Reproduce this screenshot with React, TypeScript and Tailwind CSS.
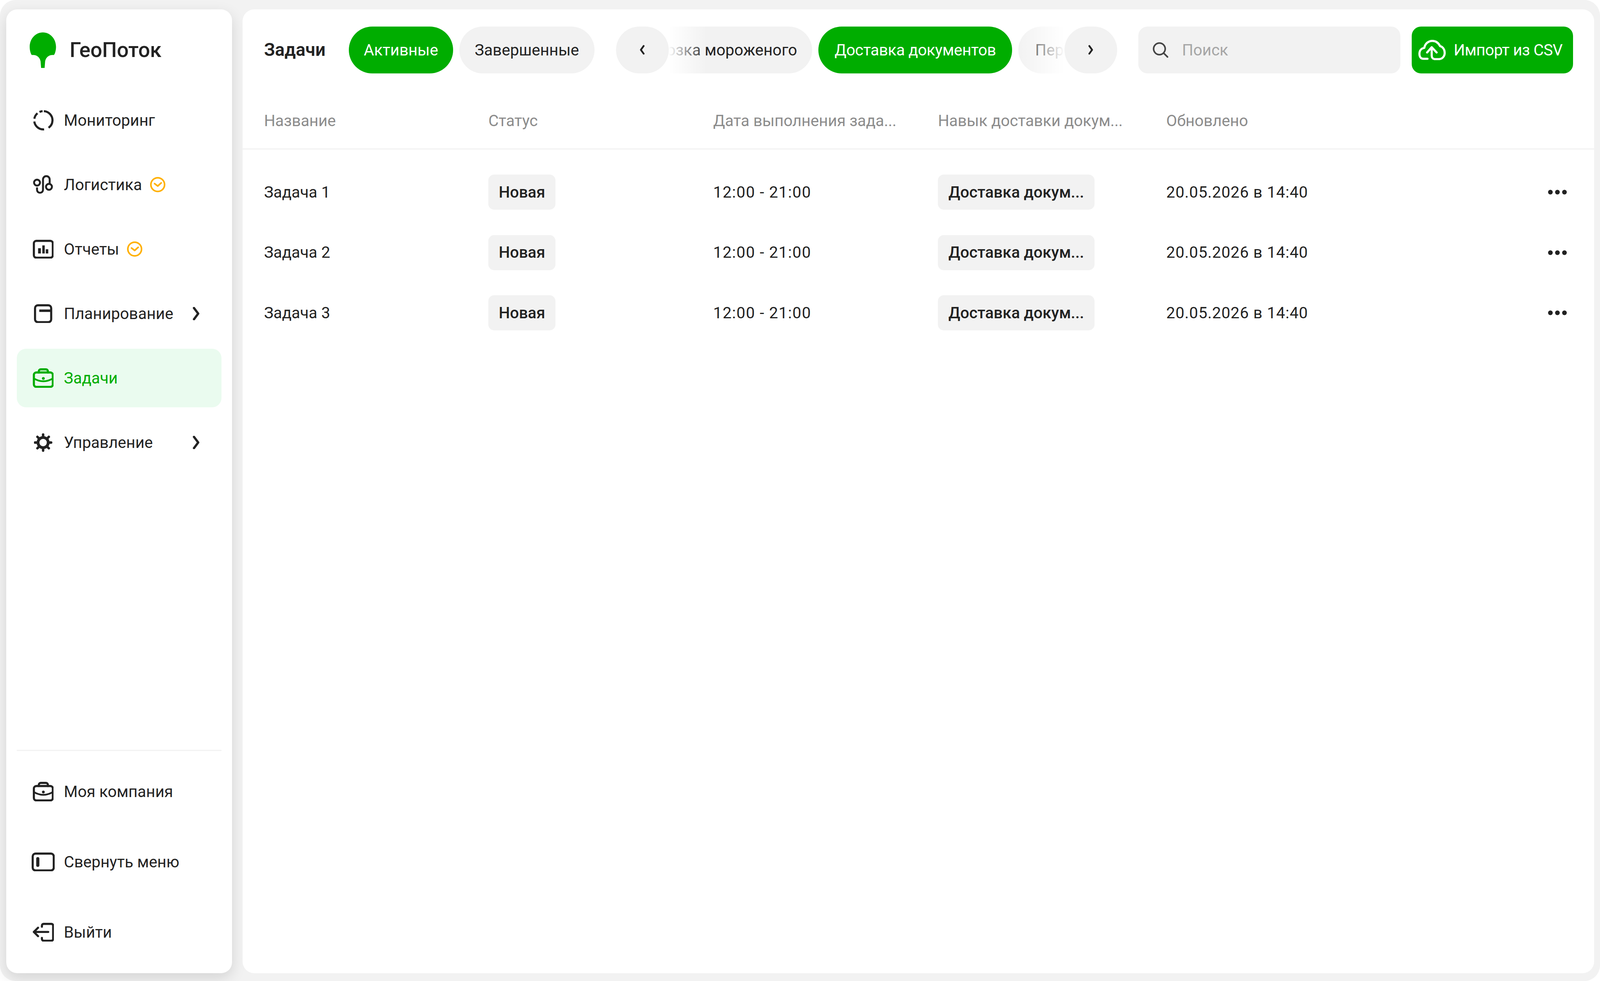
import type { ReactNode } from "react";

const GREEN = "#00ad00";

function Clock() {
  return (
    <svg viewBox="0 0 44 44" fill="none" stroke="#ffb000" strokeWidth="4.5" strokeLinecap="round" strokeLinejoin="round" className="h-auto w-[0.966vw]">
      <circle cx="22" cy="22" r="19.5" />
      <path d="M13 19l9 7 10-9" />
    </svg>
  );
}

function Chevron() {
  return (
    <svg viewBox="0 0 20 38" fill="none" stroke="#222" strokeWidth="6.5" strokeLinecap="round" strokeLinejoin="round" className="ml-auto mr-[1.383vw] h-auto w-[0.439vw] shrink-0">
      <path d="M4 3l12 16L4 35" />
    </svg>
  );
}

function Briefcase({ color = "#222" }: { color?: string }) {
  return (
    <svg viewBox="0 0 60 56" fill="none" stroke={color} strokeWidth="6" strokeLinecap="round" strokeLinejoin="round" className="h-auto w-[1.317vw]">
      <rect x="3" y="12" width="54" height="41" rx="7" />
      <path d="M17 12V9a6 6 0 0 1 6-6h14a6 6 0 0 1 6 6v3" />
      <path d="M3 29c8 5 17 8 27 8s19-3 27-8" strokeWidth="5" />
      <circle cx="30" cy="29" r="4" fill={color} stroke="none" />
    </svg>
  );
}

const icons: Record<string, ReactNode> = {
  monitor: (
    <svg viewBox="0 0 60 60" fill="none" stroke="#222" strokeWidth="6" className="h-auto w-[1.317vw]">
      <circle cx="30" cy="30" r="26" pathLength="360" strokeDasharray="142 30 87 18 40 15 20 8" transform="rotate(-87 30 30)" />
    </svg>
  ),
  route: (
    <svg viewBox="93 443 60 60" fill="none" stroke="#222" strokeWidth="5.5" strokeLinecap="round" className="h-auto w-[1.317vw]">
      <circle cx="105" cy="467" r="8.5" />
      <circle cx="139" cy="479" r="8.5" />
      <path d="M105 483v4.5a8.5 8.5 0 0 0 17 0V458a9.5 9.5 0 0 1 19 0v12" />
    </svg>
  ),
  reports: (
    <svg viewBox="0 0 60 54" fill="#222" className="h-auto w-[1.317vw]">
      <rect x="3" y="3" width="54" height="48" rx="7" fill="none" stroke="#222" strokeWidth="6" />
      <rect x="15" y="24" width="8" height="15" />
      <rect x="27" y="16" width="7" height="23" />
      <rect x="37" y="27" width="7" height="12" />
    </svg>
  ),
  plan: (
    <svg viewBox="0 0 52 54" fill="none" stroke="#222" strokeWidth="6" className="h-auto w-[1.141vw]">
      <rect x="3" y="3" width="46" height="48" rx="8" />
      <path d="M15 18.5h34" strokeWidth="7" />
    </svg>
  ),
  gear: (
    <svg viewBox="-26 -27 52 54" fill="none" stroke="#222" strokeLinecap="round" className="h-auto w-[1.141vw]">
      <circle r="14.5" strokeWidth="8" />
      {[0, 45, 90, 135, 180, 225, 270, 315].map((a) => (
        <path key={a} d="M0 -18V-23" strokeWidth="7" transform={`rotate(${a})`} />
      ))}
    </svg>
  ),
  collapse: (
    <svg viewBox="0 0 66 54" fill="none" stroke="#222" strokeWidth="6" className="h-auto w-[1.449vw]">
      <rect x="3" y="3" width="60" height="48" rx="8" />
      <rect x="13" y="13" width="9" height="28" rx="4.5" fill="#222" stroke="none" />
    </svg>
  ),
  exit: (
    <svg viewBox="90 2361 62 54" fill="none" stroke="#222" strokeWidth="6" strokeLinecap="round" strokeLinejoin="round" className="h-auto w-[1.361vw]">
      <path d="M117 2372v-3a5 5 0 0 1 5-5h22a5 5 0 0 1 5 5v38a5 5 0 0 1-5 5h-22a5 5 0 0 1-5-5v-3" />
      <path d="M135 2387H94M106 2375l-12 12 12 12" />
    </svg>
  ),
};

function NavItem({
  icon,
  label,
  active,
  badge,
  arrow,
}: {
  icon: ReactNode;
  label: string;
  active?: boolean;
  badge?: boolean;
  arrow?: boolean;
}) {
  return (
    <div className={`flex h-[150px] items-center rounded-[24px] ${active ? "bg-[#eafbef] text-[#00ad00]" : "text-[#222]"}`}>
      <div className="flex w-[3.292vw] shrink-0 justify-center">{icon}</div>
      <span className="-ml-[0.35vw] text-[0.988vw] leading-none">{label}</span>
      {badge ? (
        <span className="ml-[0.5vw] flex">
          <Clock />
        </span>
      ) : null}
      {arrow ? <Chevron /> : null}
    </div>
  );
}

function Cell({ children, className = "" }: { children: ReactNode; className?: string }) {
  return <div className={`flex items-center text-[0.988vw] ${className}`}>{children}</div>;
}

function Tag({ children, className = "" }: { children: ReactNode; className?: string }) {
  return (
    <span className={`flex h-[90px] items-center justify-center whitespace-nowrap rounded-[15px] bg-[#f2f2f2] font-medium ${className}`}>
      {children}
    </span>
  );
}

const tasks = ["Задача 1", "Задача 2", "Задача 3"];
const columns = "Название|Статус|Дата выполнения зада...|Навык доставки докум...|Обновлено".split("|");

export default function App() {
  return (
    <div className="h-screen w-screen overflow-hidden bg-white font-['Roboto',sans-serif] text-[#222]">
      <div className="flex h-full gap-[0.658vw] rounded-[40px] bg-[#f2f2f2] pb-[20px] pl-[0.395vw] pr-[0.373vw] pt-[24px]">
        {/* sidebar */}
        <aside className="flex w-[14.11vw] shrink-0 flex-col rounded-[28px] bg-white px-[0.658vw] pt-[59px] shadow-[0_12px_36px_rgba(0,0,0,0.13)]">
          <div className="mb-[59px] flex h-[91px] items-center pl-[0.812vw]">
            <svg viewBox="0 0 75 91" fill={GREEN} className="h-[91px] w-[1.646vw]" preserveAspectRatio="none">
              <path d="M37.5 0C58 0 75 16 75 37c0 9-3 18-6 21-11-1-22 3-25 16l-1.500 17h-10L31 74C28 61 17 57 6 58 3 55 0 46 0 37 0 16 17 0 37.500 0Z" />
            </svg>
            <span className="ml-[0.84vw] text-[1.295vw] font-medium leading-none">ГеоПоток</span>
          </div>
          <nav className="flex flex-col gap-[15px]">
            <NavItem icon={icons.monitor} label="Мониторинг" />
            <NavItem icon={icons.route} label="Логистика" badge />
            <NavItem icon={icons.reports} label="Отчеты" badge />
            <NavItem icon={icons.plan} label="Планирование" arrow />
            <NavItem icon={<Briefcase color={GREEN} />} label="Задачи" active />
            <NavItem icon={icons.gear} label="Управление" arrow />
          </nav>
          <div className="flex-1" />
          <div className="mb-[29px] h-[3px] bg-[#f2f2f2]" />
          <div className="flex flex-col gap-[30px] pb-[30px]">
            <NavItem icon={<Briefcase />} label="Моя компания" />
            <NavItem icon={icons.collapse} label="Свернуть меню" />
            <NavItem icon={icons.exit} label="Выйти" />
          </div>
        </aside>

        {/* main */}
        <main className="min-w-0 flex-1 rounded-[30px] bg-white">
          <div className="mt-[44px] flex h-[120px] items-center pl-[1.339vw] pr-[1.317vw] text-[0.988vw] leading-none">
            <h1 className="w-[5.29vw] shrink-0 text-[1.12vw] font-semibold">Задачи</h1>
            <div className="flex shrink-0 gap-[0.373vw]">
              <div className="flex h-[120px] w-[6.541vw] items-center justify-center rounded-full bg-[#00ad00] text-white">Активные</div>
              <div className="flex h-[120px] w-[8.45vw] items-center justify-center rounded-full bg-[#f2f2f2]">Завершенные</div>
            </div>
            <div className="ml-[1.339vw] flex shrink-0">
              <button className="flex h-[120px] w-[3.292vw] items-center justify-center rounded-full bg-[#f2f2f2]">
                <svg viewBox="0 0 16 28" fill="none" stroke="#222" strokeWidth="5" strokeLinecap="round" strokeLinejoin="round" className="h-auto w-[0.351vw]">
                  <path d="M12 3L4 14l8 11" />
                </svg>
              </button>
              <div className="relative w-[24.737vw] overflow-hidden">
                <div className="flex gap-[0.395vw]">
                  <div className="-ml-[4.631vw] flex h-[120px] w-[13.608vw] shrink-0 items-center justify-end whitespace-nowrap rounded-full bg-[#f2f2f2] pr-[0.944vw]">Перевозка мороженого</div>
                  <div className="flex h-[120px] w-[12.094vw] shrink-0 items-center justify-center whitespace-nowrap rounded-full bg-[#00ad00] tracking-[-0.01em] text-white">Доставка документов</div>
                  <div className="flex h-[120px] w-[10.975vw] shrink-0 items-center whitespace-nowrap rounded-full bg-[#f2f2f2] pl-[1.054vw]">Пер</div>
                </div>
                <div className="absolute inset-y-0 left-0 w-[2.414vw] bg-linear-to-r from-white to-transparent" />
                <div className="absolute inset-y-0 right-0 w-[2.985vw] bg-linear-to-l from-white to-transparent" />
              </div>
              <button className="flex h-[120px] w-[3.292vw] items-center justify-center rounded-full bg-[#f2f2f2]">
                <svg viewBox="0 0 16 28" fill="none" stroke="#222" strokeWidth="5" strokeLinecap="round" strokeLinejoin="round" className="h-auto w-[0.351vw]">
                  <path d="M4 3l8 11-8 11" />
                </svg>
              </button>
            </div>
            <div className="ml-[1.339vw] flex h-[120px] w-[16.374vw] shrink-0 items-center rounded-[24px] bg-[#f2f2f2] pl-[0.9vw]">
              <svg viewBox="0 0 44 44" fill="none" stroke="#444" strokeWidth="4.5" strokeLinecap="round" className="h-auto w-[0.966vw]">
                <circle cx="19" cy="19" r="16.500" />
                <path d="M31 31l11 11" />
              </svg>
              <span className="ml-[0.856vw] text-[#a6a6a6]">Поиск</span>
            </div>
            <button className="ml-[0.702vw] flex h-[120px] w-[10.097vw] shrink-0 items-center rounded-[24px] bg-[#00ad00] pl-[0.417vw] text-white">
              <svg viewBox="19 17 78 58" fill="none" stroke="#fff" strokeWidth="6" strokeLinecap="round" strokeLinejoin="round" className="h-auto w-[1.712vw]">
                <path d="M45 71H33c-9 0-11-9-11-14 0-10 6-16 14-17 2-12 11-20 23-20 11 0 18 7 22 15 8 2 13 10 13 19 0 10-7 18-17 18H67c-7 0-10-5-10-10V39" />
                <path d="M44 53l13-15 14 15" />
              </svg>
              <span className="ml-[0.5vw] whitespace-nowrap tracking-[-0.014em]">Импорт из CSV</span>
            </button>
          </div>

          <div className="grid h-[195px] grid-cols-[14.025vw_14.048vw_14.048vw_14.267vw_1fr] border-b-[3px] border-[#f2f2f2] pl-[1.339vw] pr-[1.712vw] pt-[50px] tracking-[-0.008em] text-[#8c8c8c]">
            {columns.map((c) => (
              <Cell key={c} className="whitespace-nowrap">{c}</Cell>
            ))}
          </div>

          <div className="pt-[32px]">
            {tasks.map((t) => (
              <div key={t} className="grid h-[154.5px] grid-cols-[14.025vw_14.048vw_14.048vw_14.267vw_1fr] pl-[1.339vw] pr-[1.712vw]">
                <Cell>{t}</Cell>
                <Cell>
                  <Tag className="w-[4.192vw]">Новая</Tag>
                </Cell>
                <Cell className="tracking-[0.035em]">12:00 - 21:00</Cell>
                <Cell>
                  <Tag className="w-[9.789vw]">Доставка докум...</Tag>
                </Cell>
                <Cell className="justify-between">
                  <span className="tracking-[0.022em]">20.05.2026 в 14:40</span>
                  <span className="flex gap-[0.154vw]">
                    <i className="h-[0.285vw] w-[0.285vw] rounded-full bg-[#222]" />
                    <i className="h-[0.285vw] w-[0.285vw] rounded-full bg-[#222]" />
                    <i className="h-[0.285vw] w-[0.285vw] rounded-full bg-[#222]" />
                  </span>
                </Cell>
              </div>
            ))}
          </div>
        </main>
      </div>
    </div>
  );
}
